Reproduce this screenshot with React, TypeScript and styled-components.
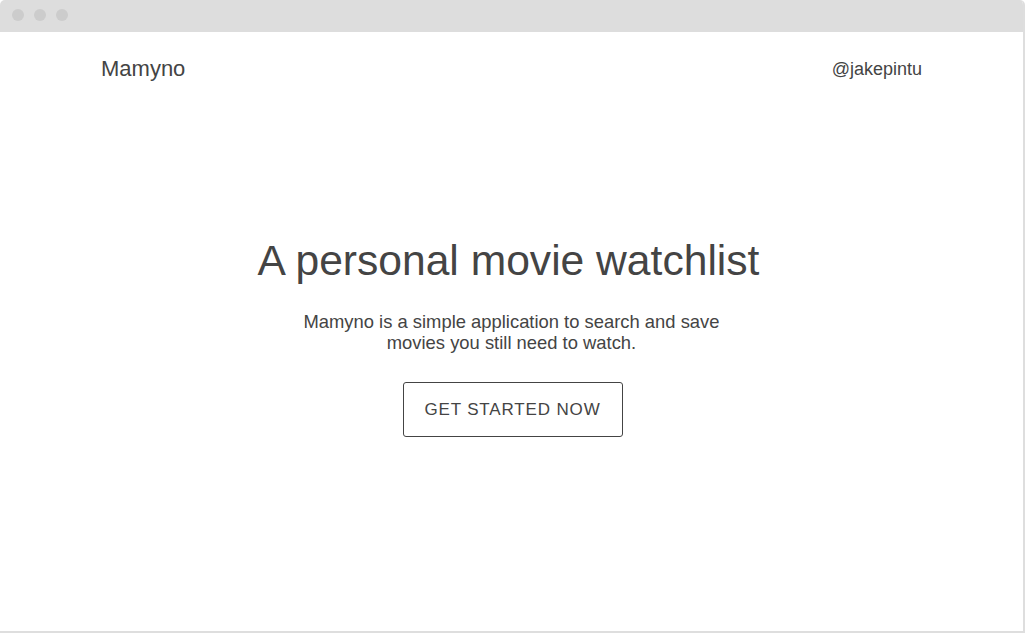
import React from "react";
import styled, { createGlobalStyle } from "styled-components";

const Global = createGlobalStyle`
  html, body { margin: 0; padding: 0; background: #ffffff; }
  body { font-family: "Liberation Sans", Arial, sans-serif; color: #444444; }
  * { box-sizing: border-box; }
`;

const Window = styled.div`
  width: 1025px;
  height: 633px;
  border-right: 2px solid #dedede;
  border-bottom: 2px solid #dedede;
  border-radius: 5px 5px 0 0;
  overflow: hidden;
  display: flex;
  flex-direction: column;
  background: #ffffff;
`;

const TitleBar = styled.div`
  height: 32px;
  flex: none;
  background: #dddddd;
  display: flex;
  align-items: center;
  gap: 10px;
  padding-left: 12px;
`;

const Dot = styled.span`
  width: 12px;
  height: 12px;
  border-radius: 50%;
  background: #cccccc;
  margin-top: -2px;
`;

const Header = styled.header`
  display: flex;
  justify-content: space-between;
  align-items: center;
  padding: 24px 101px 0 101px;
`;

const Logo = styled.div`
  font-size: 22px;
  color: #444444;
`;

const Handle = styled.a`
  font-size: 18px;
  color: #444444;
  text-decoration: none;
`;

const Hero = styled.main`
  display: flex;
  flex-direction: column;
  align-items: center;
  text-align: center;
  padding-top: 154px;
`;

const Title = styled.h1`
  margin: 0 6px 0 0;
  font-size: 42.6px;
  font-weight: 400;
  line-height: 48px;
  color: #444444;
`;

const Lead = styled.p`
  margin: 27px 0 0;
  max-width: 450px;
  font-size: 18.4px;
  line-height: 21px;
  color: #444444;
`;

const CTA = styled.button`
  margin: 29px 0 0 2px;
  width: 220px;
  height: 55px;
  padding: 0;
  border: 1px solid #444444;
  border-radius: 3px;
  background: #ffffff;
  font-family: "Liberation Sans", Arial, sans-serif;
  font-size: 17px;
  letter-spacing: 0.85px;
  color: #444444;
  cursor: pointer;
`;

export default function App() {
  return (
    <>
      <Global />
      <Window>
        <TitleBar>
          <Dot />
          <Dot />
          <Dot />
        </TitleBar>
        <Header>
          <Logo>Mamyno</Logo>
          <Handle href="#">@jakepintu</Handle>
        </Header>
        <Hero>
          <Title>A personal movie watchlist</Title>
          <Lead>Mamyno is a simple application to search and save movies you still need to watch.</Lead>
          <CTA>GET STARTED NOW</CTA>
        </Hero>
      </Window>
    </>
  );
}
